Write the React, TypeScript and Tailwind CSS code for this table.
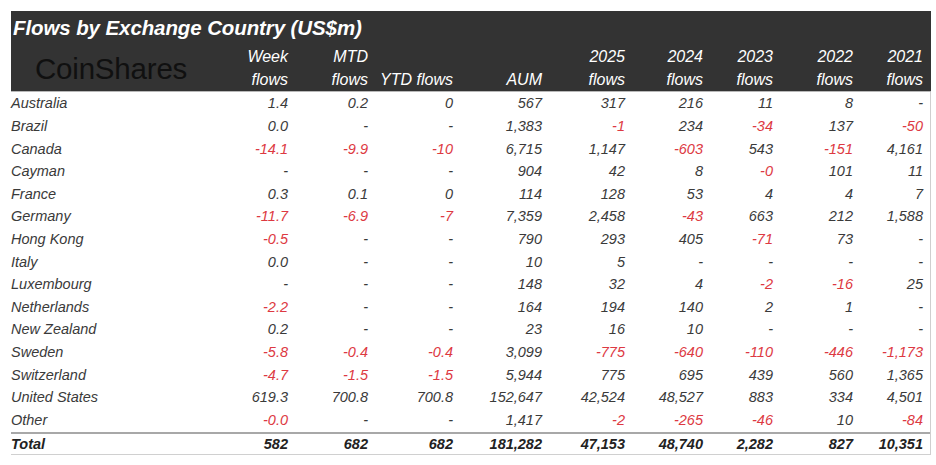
const rows: [string, string[]][] = [
  ["Australia", ["1.4", "0.2", "0", "567", "317", "216", "11", "8", "-"]],
  ["Brazil", ["0.0", "-", "-", "1,383", "-1", "234", "-34", "137", "-50"]],
  ["Canada", ["-14.1", "-9.9", "-10", "6,715", "1,147", "-603", "543", "-151", "4,161"]],
  ["Cayman", ["-", "-", "-", "904", "42", "8", "-0", "101", "11"]],
  ["France", ["0.3", "0.1", "0", "114", "128", "53", "4", "4", "7"]],
  ["Germany", ["-11.7", "-6.9", "-7", "7,359", "2,458", "-43", "663", "212", "1,588"]],
  ["Hong Kong", ["-0.5", "-", "-", "790", "293", "405", "-71", "73", "-"]],
  ["Italy", ["0.0", "-", "-", "10", "5", "-", "-", "-", "-"]],
  ["Luxembourg", ["-", "-", "-", "148", "32", "4", "-2", "-16", "25"]],
  ["Netherlands", ["-2.2", "-", "-", "164", "194", "140", "2", "1", "-"]],
  ["New Zealand", ["0.2", "-", "-", "23", "16", "10", "-", "-", "-"]],
  ["Sweden", ["-5.8", "-0.4", "-0.4", "3,099", "-775", "-640", "-110", "-446", "-1,173"]],
  ["Switzerland", ["-4.7", "-1.5", "-1.5", "5,944", "775", "695", "439", "560", "1,365"]],
  ["United States", ["619.3", "700.8", "700.8", "152,647", "42,524", "48,527", "883", "334", "4,501"]],
  ["Other", ["-0.0", "-", "-", "1,417", "-2", "-265", "-46", "10", "-84"]],
];

const total = ["582", "682", "682", "181,282", "47,153", "48,740", "2,282", "827", "10,351"];

const grid =
  "grid grid-cols-[197px_80px_80px_85px_89px_83px_78px_70px_80px_70px] pr-[8px]";

const headTop = ["Week", "MTD", "", "", "2025", "2024", "2023", "2022", "2021"];
const headBottom = ["flows", "flows", "YTD flows", "AUM", "flows", "flows", "flows", "flows", "flows"];

const isNeg = (v: string) => /^-\d/.test(v);

export default function App() {
  return (
    <div
      className="w-[936px] h-[465px] bg-white pt-[11px] pl-[11px]"
      style={{ fontFamily: '"Liberation Sans", Arial, sans-serif' }}
    >
      <div className="w-[920px]">
        <div className="bg-[#333333] border-b border-[#b8b8b8] italic text-white">
          <div className="h-[34px] flex items-center pl-[2px] text-[20.5px] font-bold tracking-[-0.1px]">
            Flows by Exchange Country (US$m)
          </div>
          <div className={`${grid} h-[46px] text-[16px] leading-[23px]`}>
            <div className="flex items-center pl-[24px] not-italic text-[29.5px] text-[#101010] tracking-[-0.2px]">
              CoinShares
            </div>
            {headTop.map((t, i) => (
              <div key={i} className="text-right flex flex-col">
                <span className="h-[23px]">{t}</span>
                <span className="h-[23px]">{headBottom[i]}</span>
              </div>
            ))}
          </div>
        </div>
        <div className="pt-[1px] border-r border-[#cfcfcf] text-[14.5px] italic text-[#3a3a3a]">
          {rows.map(([name, vals]) => (
            <div key={name} className={`${grid} h-[22.6px] items-center`}>
              <div>{name}</div>
              {vals.map((v, i) => (
                <div key={i} className={`text-right ${isNeg(v) ? "text-[#dd3942]" : ""}`}>
                  {v}
                </div>
              ))}
            </div>
          ))}
          <div className={`${grid} h-[23px] items-center border-t-2 border-[#a8a8a8] border-b border-b-[#d0d0d0] font-bold text-[#222]`}>
            <div>Total</div>
            {total.map((v, i) => (
              <div key={i} className="text-right">
                {v}
              </div>
            ))}
          </div>
        </div>
      </div>
    </div>
  );
}
